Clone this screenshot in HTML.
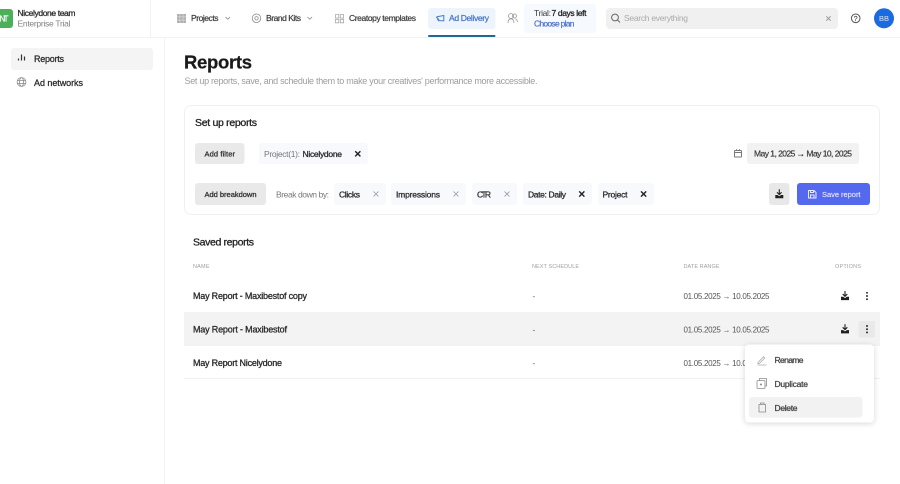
<!DOCTYPE html>
<html lang="en"><head><meta charset="utf-8"><title>Reports</title>
<style>
html,body{margin:0;padding:0;background:#fff;width:900px;height:484px;overflow:hidden}
svg{display:block;font-family:"Liberation Sans",sans-serif}
text{white-space:pre}
.n{font-size:8.5px;fill:#3a3a3a}
.nm{font-size:8.5px;fill:#3a3a3a;stroke:#3a3a3a;stroke-width:.2}
.h{font-size:8.5px;fill:#2a2a2a;stroke:#2a2a2a;stroke-width:.28}
.g{font-size:8.5px;fill:#808080}
.b{font-size:7.5px;fill:#333;stroke:#333;stroke-width:.3}
.c{font-size:5.5px;fill:#a0a0a0}
.r{font-size:9px;fill:#2a2a2a;stroke:#2a2a2a;stroke-width:.3}
.d{font-size:8px;fill:#555}
.t{font-size:10.5px;fill:#222;stroke:#222;stroke-width:.3}
.ic{fill:none;stroke:#8a8a8a;stroke-width:.8}
.dk{fill:none;stroke:#222;stroke-width:1.4}
.lx{fill:none;stroke:#999;stroke-width:.8}
</style></head><body>
<svg width="900" height="484" viewBox="0 0 900 484" xmlns="http://www.w3.org/2000/svg">
<rect width="900" height="484" fill="#fff"/>
<path d="M0 37.5H900M150.5 0V37M164.5 37V484" stroke="#f2f2f2" fill="none"/>

<rect x="-6" y="9" width="19" height="19" rx="3" fill="#4cb05a"/>
<text x="-0.5" y="21.500" font-size="8" fill="#fff" stroke="#fff" stroke-width=".2" textLength="9">NT</text>
<text x="17.500" y="16" class="h" textLength="58">Nicelydone team</text>
<text x="17.500" y="26.500" class="g" textLength="53">Enterprise Trial</text>

<path fill="#b0b0b0" d="M177 14h2.800v2.800H177zM180.100 14h2.800v2.800h-2.800zM183.200 14h2.800v2.800h-2.800zM177 17.100h2.800v2.800H177zM180.100 17.100h2.800v2.800h-2.800zM183.200 17.100h2.800v2.800h-2.800zM177 20.200h2.800V23H177zM180.100 20.200h2.800V23h-2.800zM183.200 20.200h2.800V23h-2.800z"/>
<text x="191" y="21" class="nm" textLength="27.500">Projects</text>
<path d="M225.500 17l2.300 2.200 2.300-2.200" class="ic"/>
<circle cx="256.500" cy="18.300" r="4.300" class="ic"/><circle cx="256.500" cy="18.300" r="1.700" class="ic"/>
<text x="266" y="21" class="nm" textLength="35">Brand Kits</text>
<path d="M307.500 17l2.300 2.200 2.300-2.200" class="ic"/>
<path d="M335.500 14.500h3.300v3.500h-3.300zM340.300 14.500h3.300v3.500h-3.300zM335.500 19.300h3.300v3.500h-3.300zM340.300 19.300h3.300v3.500h-3.300z" class="ic" style="stroke:#aaa"/>
<text x="349" y="21" class="nm" textLength="67">Creatopy templates</text>

<rect x="428" y="8" width="67.500" height="21" rx="3" fill="#eef4fb"/>
<rect x="428" y="35" width="67.500" height="2" rx="1" fill="#1f6796"/>
<path d="M443.800 15.500v5.300h-5.300l-.8-1.300 1-.2-2.200-2 .6-.6z" fill="none" stroke="#4a7cc6"/>
<text x="449" y="21" class="nm" style="fill:#4370c4;stroke:#4370c4" textLength="40">Ad Delivery</text>
<g class="ic" style="fill:none;stroke:#999"><circle cx="511" cy="16" r="2.500"/><circle cx="514.500" cy="16" r="2"/><path d="M508 23c.2-2.800 1.300-4.200 3-4.200s2.800 1.400 3 4.200M515.500 18.800c1 .5 1.700 1.500 2 3.200"/></g>

<rect x="524" y="4" width="72" height="29" rx="3" fill="#f6f9fd"/>
<text x="534" y="16" class="n" textLength="17">Trial:</text>
<text x="551.500" y="16" class="h" style="fill:#222;stroke:#222" textLength="35">7 days left</text>
<text x="534" y="26.500" class="nm" style="fill:#4c70cc;stroke:#4c70cc" textLength="40.500">Choose plan</text>

<rect x="606" y="8" width="232" height="21" rx="4" fill="#f0f0f0"/>
<circle cx="615" cy="17.500" r="3.400" fill="none" stroke="#666"/><path d="M617.500 20l2.500 2.500" stroke="#666" fill="none"/>
<text x="624" y="21" class="n" style="fill:#aaa" textLength="64">Search everything</text>
<path d="M826.300 16.300l4.400 4.400m0-4.400l-4.400 4.400" stroke="#999" fill="none"/>
<circle cx="855.700" cy="18.300" r="4.300" fill="none" stroke="#555"/>
<text x="853.700" y="21" font-size="7" fill="#555" stroke="#555" stroke-width=".2">?</text>
<circle cx="884" cy="18.300" r="10" fill="#1b6ae0"/>
<text x="879" y="21" font-size="7.500" fill="#dfe9fb" textLength="10">BB</text>

<rect x="11" y="48" width="142" height="22" rx="3" fill="#f4f4f4"/>
<path d="M18.500 60.500v-2M21.500 60.500v-6M24.500 60.500v-4" stroke="#333" stroke-width="1.200" fill="none"/>
<text x="34" y="62" class="h" style="font-size:9px" textLength="30">Reports</text>
<circle cx="21.500" cy="82" r="4.400" class="ic"/><ellipse cx="21.500" cy="82" rx="2" ry="4.400" class="ic"/><path d="M17.100 80.500h8.800M17.100 83.500h8.800" class="ic"/>
<text x="34" y="86" class="h" style="font-size:9px" textLength="49">Ad networks</text>

<text x="184" y="68.500" font-size="18.500" font-weight="700" fill="#1a1a1a" stroke="#1a1a1a" stroke-width=".25" textLength="68">Reports</text>
<text x="184.500" y="84" font-size="9" fill="#9c9c9c" textLength="353">Set up reports, save, and schedule them to make your creatives' performance more accessible.</text>

<rect x="184.500" y="105.500" width="695" height="109" rx="7" fill="#fff" stroke="#f0f0f0"/>
<text x="195" y="126" class="t" textLength="62">Set up reports</text>

<rect x="195" y="143" width="49.500" height="21" rx="3" fill="#e9e9e9"/>
<text x="204.500" y="156.500" class="b" textLength="30.500">Add filter</text>
<rect x="259" y="143" width="109" height="21" rx="3" fill="#f7f9fd"/>
<text x="264" y="156.800" class="n" style="fill:#777" textLength="36">Project(1):</text>
<text x="302.500" y="156.800" class="h" textLength="39.500">Nicelydone</text>
<path d="M355.200 151.200l5.200 5.200m0-5.200l-5.200 5.200" class="dk"/>

<rect x="734.500" y="150.500" width="7" height="6.500" rx=".8" fill="none" stroke="#777"/><path d="M734.500 152.500h7M736.500 149.300v1.500M739.500 149.300v1.500" stroke="#777" fill="none"/>
<rect x="747" y="143" width="112" height="21" rx="3" fill="#f2f2f2"/>
<text x="754" y="156.500" class="nm" textLength="98">May 1, 2025 → May 10, 2025</text>

<rect x="195" y="183" width="71" height="22" rx="3" fill="#e9e9e9"/>
<text x="204.500" y="197" class="b" textLength="52">Add breakdown</text>
<text x="276" y="197.300" class="n" style="fill:#777" textLength="53">Break down by:</text>

<rect x="334" y="183" width="52" height="22" rx="3" fill="#f7f9fd"/>
<text x="339" y="197.300" class="h" textLength="21">Clicks</text>
<path d="M373.500 191.500l5 5m0-5l-5 5" class="lx"/>
<rect x="391" y="183" width="75" height="22" rx="3" fill="#f7f9fd"/>
<text x="396" y="197.300" class="h" textLength="44">Impressions</text>
<path d="M453.500 191.500l5 5m0-5l-5 5" class="lx"/>
<rect x="472" y="183" width="45" height="22" rx="3" fill="#f7f9fd"/>
<text x="477" y="197.300" class="h" textLength="14">CTR</text>
<path d="M504.500 191.500l5 5m0-5l-5 5" class="lx"/>
<rect x="523" y="183" width="69" height="22" rx="3" fill="#f7f9fd"/>
<text x="528" y="197.300" class="h" textLength="38">Date: Daily</text>
<path d="M579.200 191.400l5.200 5.200m0-5.200l-5.200 5.200" class="dk"/>
<rect x="598" y="183" width="56" height="22" rx="3" fill="#f7f9fd"/>
<text x="602.500" y="197.300" class="h" textLength="25">Project</text>
<path d="M641 191.400l5.200 5.200m0-5.200l-5.200 5.200" class="dk"/>

<rect x="769" y="183" width="20.500" height="22" rx="3" fill="#e8e8e8"/>
<path d="M779.300 189.300v5M777 192.300l2.300 2.300 2.300-2.300" fill="none" stroke="#222" stroke-width="1.100"/>
<path d="M775.300 195h2.200l1.800 1.300 1.800-1.300h2.200v3.300h-8z" fill="#222"/>
<rect x="797" y="183" width="73" height="22" rx="3" fill="#5569ef"/>
<path d="M808.500 190.500h5.500l2 2v5.500h-7.500zM810.500 190.500v2h3v-2M810.500 198v-3h3.500v3" fill="none" stroke="#e6e9ff"/>
<text x="822" y="197" class="b" style="fill:#dfe3ff;stroke:#dfe3ff;stroke-width:.15" textLength="38.500">Save report</text>

<text x="193" y="245.500" class="t" textLength="61">Saved reports</text>
<text x="193" y="268" class="c" textLength="16.500">NAME</text>
<text x="532" y="268" class="c" textLength="47">NEXT SCHEDULE</text>
<text x="683.500" y="268" class="c" textLength="36">DATE RANGE</text>
<text x="835" y="268" class="c" textLength="26">OPTIONS</text>

<rect x="184" y="312" width="696" height="33.500" fill="#f3f3f3"/>
<path d="M184 378.500H880M184 345.500H880" stroke="#f1f1f1" fill="none"/>

<text x="193" y="299" class="r" textLength="114">May Report - Maxibestof copy</text>
<text x="193" y="332.500" class="r" textLength="94">May Report - Maxibestof</text>
<text x="193" y="366" class="r" textLength="89">May Report Nicelydone</text>
<text x="532.500" y="299" class="d">-</text>
<text x="532.500" y="332.500" class="d">-</text>
<text x="532.500" y="366" class="d">-</text>
<text x="683.500" y="299" class="d" textLength="86">01.05.2025 → 10.05.2025</text>
<text x="683.500" y="332.500" class="d" textLength="86">01.05.2025 → 10.05.2025</text>
<text x="683.500" y="366" class="d" textLength="86">01.05.2025 → 10.05.2025</text>

<g fill="none" stroke="#1f1f1f" stroke-width="1.100">
<path d="M845 291v5M842.700 294l2.300 2.300 2.300-2.300"/>
<path d="M845 324.300v5M842.700 327.300l2.300 2.300 2.300-2.300"/>
</g>
<path d="M841 296.800h2.200l1.800 1.300 1.800-1.300h2.200v3.300h-8zM841 330.100h2.200l1.800 1.300 1.800-1.300h2.200v3.300h-8z" fill="#1f1f1f"/>
<rect x="858.500" y="321" width="16.500" height="16.500" rx="2" fill="#e9e9e9"/>
<g fill="#222"><circle cx="867" cy="292.800" r=".95"/><circle cx="867" cy="296" r=".95"/><circle cx="867" cy="299.200" r=".95"/><circle cx="867" cy="326" r=".95"/><circle cx="867" cy="329.200" r=".95"/><circle cx="867" cy="332.400" r=".95"/></g>

<rect x="745" y="344.500" width="129" height="78" rx="4" fill="#fff" style="filter:drop-shadow(0 1px 3px rgba(0,0,0,.16))"/>
<rect x="749" y="397" width="113.500" height="20.500" rx="3" fill="#f2f2f2"/>
<path d="M758 362.500l5.500-5.800 1.300 1.300-5.500 5.500h-1.500zM757.500 365h9" class="ic" style="stroke:#aaa"/>
<rect x="757" y="380.500" width="8" height="8" rx="1" class="ic"/><path d="M759.500 380.500v-2h7v7.500h-1.500" class="ic"/><circle cx="761" cy="384.500" r="1" fill="#888"/>
<path d="M759 404.500h6.500v7.500h-6.500zM760.500 404.500v-1.500h3.500v1.500" class="ic"/>
<text x="774.500" y="363" class="h" style="fill:#444;stroke:#444" textLength="29">Rename</text>
<text x="774.500" y="387" class="h" style="fill:#444;stroke:#444" textLength="33.500">Duplicate</text>
<text x="774.500" y="411" class="h" style="fill:#444;stroke:#444" textLength="23">Delete</text>
</svg>
</body></html>
